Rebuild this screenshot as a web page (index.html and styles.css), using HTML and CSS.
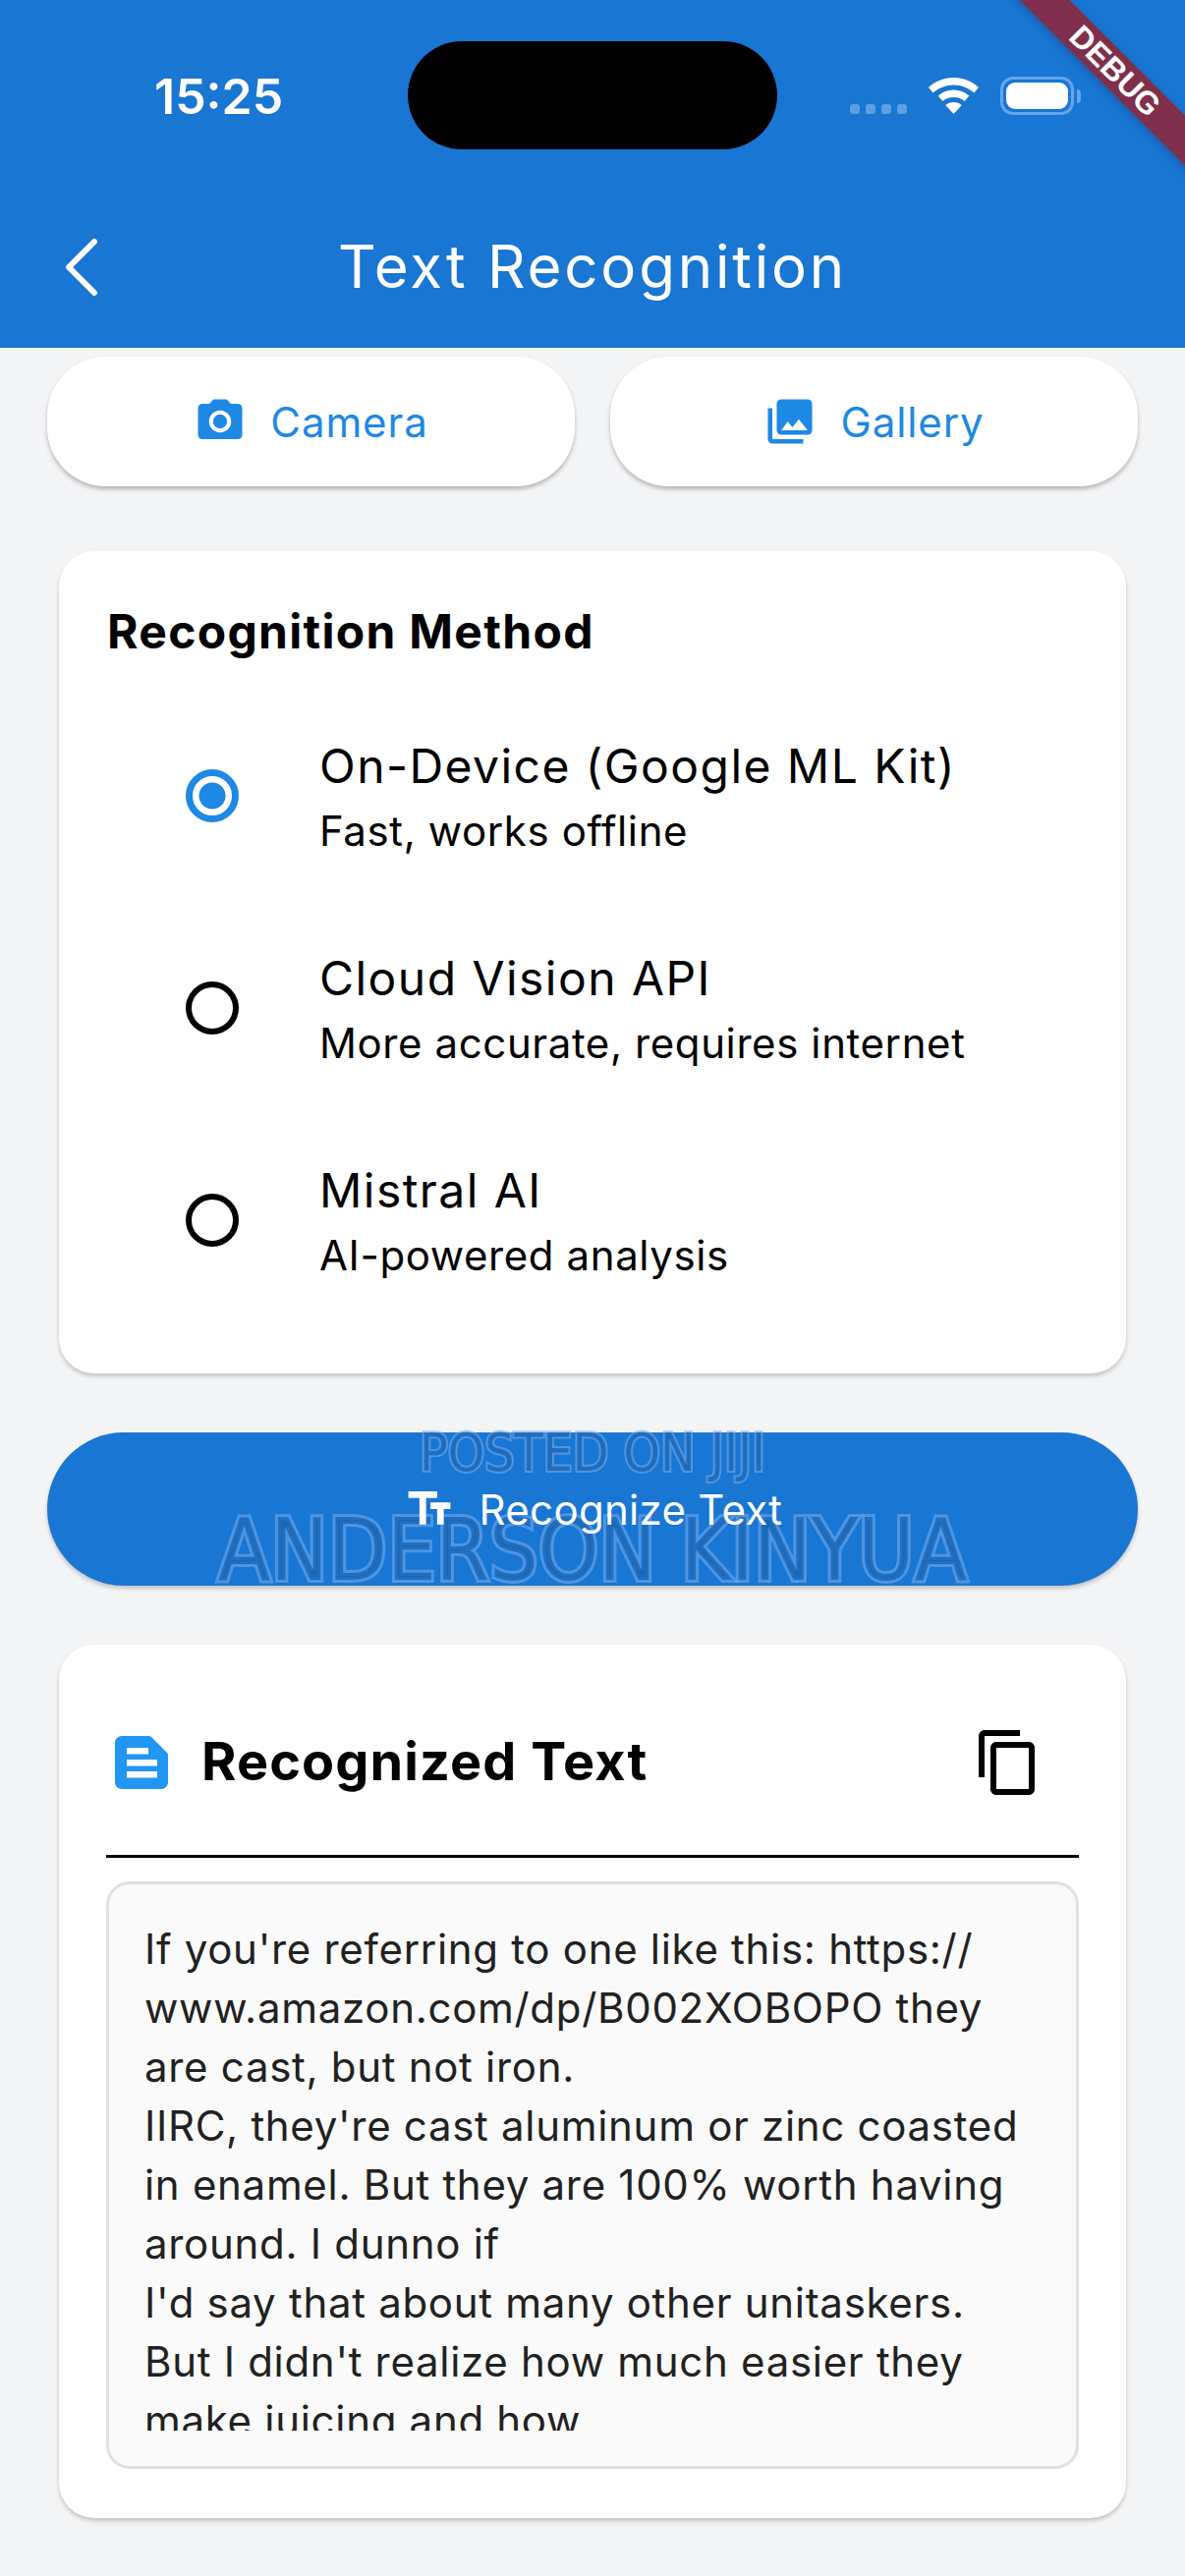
FILE: index.html
```html
<!DOCTYPE html>
<html lang="en">
<head>
  <meta charset="UTF-8">
  <title>Text Recognition</title>
  <link rel="stylesheet" href="styles.css">
</head>
<body>
  <header class="appbar">
    <div class="status">
      <span class="time">15:25</span>
      <div class="island"></div>
      <div class="signal"><i></i><i></i><i></i><i></i></div>
      <svg class="wifi" width="51" height="37" viewBox="0 0 51 37">
        <path d="M25.5 0C15.5 0 6.8 3.8 0 10l4.6 5.6C10.300 10.500 17.500 7.500 25.500 7.500S40.700 10.500 46.400 15.600L51 10C44.200 3.800 35.500 0 25.500 0z" fill="#fff"/>
        <path d="M25.500 12.500C19.500 12.500 14 14.800 9.700 18.500l4.600 5.600C17.300 21.500 21.200 20 25.500 20s8.200 1.500 11.200 4.100l4.600-5.600C37 14.800 31.500 12.500 25.500 12.500z" fill="#fff"/>
        <path d="M25.500 25c-3.200 0-6.100 1.100-8.300 3l8.300 9 8.300-9c-2.200-1.900-5.100-3-8.300-3z" fill="#fff"/>
      </svg>
      <div class="battery"><div class="battery-fill"></div></div>
      <div class="battery-nub"></div>
    </div>
    <div class="toolbar">
      <svg class="back" width="36" height="60" viewBox="0 0 36 60">
        <path d="M31 4L5 30l26 26" fill="none" stroke="#fff" stroke-width="6" stroke-linecap="round" stroke-linejoin="round"/>
      </svg>
      <h1>Text Recognition</h1>
      <span></span>
    </div>
    <div class="debug-banner">DEBUG</div>
  </header>

  <main>
    <div class="actions">
      <button class="pick">
        <svg width="54" height="54" viewBox="0 0 24 24"><path d="M9 2L7.170 4H4c-1.100 0-2 .9-2 2v12c0 1.100.9 2 2 2h16c1.100 0 2-.9 2-2V6c0-1.100-.9-2-2-2h-3.170L15 2H9zm3 15c-2.760 0-5-2.240-5-5s2.240-5 5-5 5 2.240 5 5-2.240 5-5 5z"/><circle cx="12" cy="12" r="3.200"/></svg>
        <span>Camera</span>
      </button>
      <button class="pick">
        <svg width="54" height="54" viewBox="0 0 24 24"><path d="M22 16V4c0-1.100-.9-2-2-2H8c-1.100 0-2 .9-2 2v12c0 1.100.9 2 2 2h12c1.100 0 2-.9 2-2zm-11-4l2.030 2.710L16 11l4 5H8l3-4zM2 6v14c0 1.100.9 2 2 2h14v-2H4V6H2z"/></svg>
        <span>Gallery</span>
      </button>
    </div>

    <section class="card method">
      <h2>Recognition Method</h2>
      <div class="option">
        <div class="radio selected"></div>
        <div>
          <div class="option-title">On-Device (Google ML Kit)</div>
          <div class="option-sub">Fast, works offline</div>
        </div>
      </div>
      <div class="option">
        <div class="radio"></div>
        <div>
          <div class="option-title">Cloud Vision API</div>
          <div class="option-sub">More accurate, requires internet</div>
        </div>
      </div>
      <div class="option">
        <div class="radio"></div>
        <div>
          <div class="option-title">Mistral AI</div>
          <div class="option-sub">AI-powered analysis</div>
        </div>
      </div>
    </section>

    <button class="recognize">
      <div class="mark mark-small">POSTED ON JIJI</div>
      <div class="mark mark-big">ANDERSON KINYUA</div>
      <svg class="recognize-icon" width="54" height="54" viewBox="0 0 24 24"><path fill="#fff" d="M2.500 4v3h5v12h3V7h5V4h-13zm19 5h-9v3h3v7h3v-7h3V9z"/></svg>
      <span class="recognize-label">Recognize Text</span>
    </button>

    <section class="card result">
      <div class="result-head">
        <svg class="doc" width="54" height="54" viewBox="0 0 54 54">
          <path fill="#2196f3" d="M7 0h27c1.500 0 2.500.5 3.500 1.500l15 15c1 1 1.500 2 1.500 3.500v27c0 4-3 7-7 7H7c-4 0-7-3-7-7V7c0-4 3-7 7-7z"/>
          <path fill="#fff" d="M12 12h22v6.500H12zM12 24h31v6.500H12zM12 36h31v6.500H12z"/>
        </svg>
        <h3>Recognized Text</h3>
        <div class="copy">
          <svg width="72" height="72" viewBox="0 0 24 24"><path d="M16 1H4c-1.100 0-2 .9-2 2v14h2V3h12V1zm3 4H8c-1.100 0-2 .9-2 2v14c0 1.100.9 2 2 2h11c1.100 0 2-.9 2-2V7c0-1.100-.9-2-2-2zm0 16H8V7h11v14z"/></svg>
        </div>
      </div>
      <div class="rule"></div>
      <div class="textbox">
        <div class="textbox-scroll">If you're referring to one like this: https://<br>www.amazon.com/dp/B002XOBOPO they<br>are cast, but not iron.<br>IIRC, they're cast aluminum or zinc coasted<br>in enamel. But they are 100% worth having<br>around. I dunno if<br>I'd say that about many other unitaskers.<br>But I didn't realize how much easier they<br>make juicing and how</div>
      </div>
    </section>
  </main>
</body>
</html>
```

FILE: styles.css
```css
* {
  box-sizing: border-box;
}

body {
  margin: 0;
  width: 1206px;
  height: 2622px;
  overflow: hidden;
  background-color: #f3f4f6;
  font-family: Inter, "Noto Sans", sans-serif;
  color: #000;
}

/* App bar with status row */
.appbar {
  position: relative;
  height: 354px;
  background-color: #1976d2;
  color: #fff;
  overflow: hidden;
}

.status {
  display: flex;
  align-items: flex-start;
  height: 207px;
  padding: 42px 0 0 157px;
}

.time {
  width: 131px;
  margin-top: 30px;
  font-size: 50px;
  line-height: 52px;
  font-weight: 600;
}

.island {
  width: 376px;
  height: 110px;
  margin-left: 127px;
  border-radius: 55px;
  background-color: #000;
}

.signal {
  display: flex;
  gap: 6px;
  margin: 64px 0 0 74px;
}

.signal i {
  width: 10px;
  height: 10px;
  border-radius: 3px;
  background-color: rgba(255, 255, 255, 0.3);
}

.wifi {
  margin: 37px 0 0 22px;
}

.battery {
  width: 75px;
  height: 39px;
  margin: 36px 0 0 22px;
  padding: 3px;
  border: 3px solid #64a5f0;
  border-radius: 13px;
}

.battery-fill {
  width: 100%;
  height: 100%;
  border-radius: 9px;
  background-color: #fff;
}

.battery-nub {
  width: 4px;
  height: 14px;
  margin: 49px 0 0 3px;
  border-radius: 0 4px 4px 0;
  background-color: #64a5f0;
}

.toolbar {
  display: grid;
  grid-template-columns: 1fr auto 1fr;
  align-items: center;
  height: 130px;
  padding-left: 65px;
}

.back {
  display: block;
}

.toolbar h1 {
  margin: 0 0 2px -65px;
  font-size: 60px;
  line-height: 72px;
  font-weight: 400;
  letter-spacing: 2.800px;
}

.debug-banner {
  position: absolute;
  top: 54px;
  left: 985px;
  width: 300px;
  height: 36px;
  transform: rotate(45deg);
  background-color: #7f2f4c;
  box-shadow: 0 3px 8px rgba(0, 0, 0, 0.2);
  color: #fff;
  font-family: "Liberation Sans", sans-serif;
  font-size: 32px;
  line-height: 36px;
  font-weight: 700;
  text-align: center;
}

/* Camera / Gallery */
.actions {
  display: flex;
  gap: 36px;
  padding: 9px 48px 0;
}

.pick {
  flex: 1;
  display: flex;
  align-items: center;
  justify-content: center;
  gap: 24px;
  height: 132px;
  border: none;
  border-radius: 60px;
  background-color: #fff;
  box-shadow: 0 3px 4px rgba(0, 0, 0, 0.25);
  color: #1e88e5;
  font-family: inherit;
  font-size: 42px;
  letter-spacing: 0.900px;
}

.pick svg {
  fill: #1e88e5;
}

.card {
  margin: 0 60px;
  background-color: #fff;
  border-radius: 36px;
  box-shadow: 0 3px 4px rgba(0, 0, 0, 0.2);
}

.method {
  margin-top: 66px;
  padding: 46px 48px 48px;
}

.method h2 {
  margin: 0 0 23px;
  padding-left: 1px;
  font-size: 48px;
  line-height: 72px;
  font-weight: 700;
  letter-spacing: 1.300px;
}

.option {
  display: flex;
  align-items: center;
  gap: 82px;
  height: 216px;
  padding-left: 81px;
}

.radio {
  width: 54px;
  height: 54px;
  border: 6px solid #000;
  border-radius: 50%;
}

.radio.selected {
  border: 7px solid #1e88e5;
  background: radial-gradient(circle, #1e88e5 0 13px, #fff 14px);
}

.option-title {
  font-size: 48px;
  line-height: 72px;
  letter-spacing: 1.450px;
}

.option-sub {
  font-size: 42px;
  line-height: 60px;
  letter-spacing: 0.600px;
}

.recognize {
  position: relative;
  display: flex;
  align-items: center;
  justify-content: center;
  gap: 24px;
  width: 1110px;
  height: 156px;
  margin: 60px 48px;
  border: none;
  border-radius: 78px;
  background-color: #1976d2;
  box-shadow: 0 3px 4px rgba(0, 0, 0, 0.2);
  color: #fff;
  font-family: inherit;
  font-size: 42px;
  letter-spacing: 0.300px;
}

.recognize-icon,
.recognize-label {
  position: relative;
}

/* Site watermark printed over the button */
.mark {
  position: absolute;
  left: 0;
  right: 0;
  font-family: "DejaVu Sans", sans-serif;
  font-stretch: condensed;
  text-align: center;
  letter-spacing: 0;
  color: rgba(24, 100, 180, 0.8);
  paint-order: stroke fill;
}

.mark-small {
  top: -3px;
  font-size: 53px;
  line-height: 48px;
  -webkit-text-stroke: 4px rgba(120, 175, 240, 0.55);
}

.mark-big {
  top: 78px;
  font-size: 87px;
  line-height: 84px;
  -webkit-text-stroke: 6px rgba(110, 170, 240, 0.6);
}

.result {
  padding: 48px 48px 50px;
}

.result-head {
  display: flex;
  align-items: center;
  height: 144px;
}

.doc {
  margin-left: 9px;
}

.result-head h3 {
  flex: 1;
  margin: 0 0 3px 34px;
  font-size: 54px;
  line-height: 72px;
  font-weight: 700;
  letter-spacing: 1.100px;
}

.copy {
  display: flex;
  align-items: center;
  justify-content: center;
  width: 144px;
  height: 144px;
}

.rule {
  height: 3px;
  margin: 22px 0 24px;
  background-color: #000;
}

.textbox {
  height: 598px;
  padding: 36px;
  border: 3px solid #e0e0e0;
  border-radius: 24px;
  background-color: #fafafa;
}

.textbox-scroll {
  height: 520px;
  overflow: hidden;
  font-size: 42px;
  line-height: 60px;
  letter-spacing: 0.700px;
  color: #212121;
  white-space: nowrap;
}
```
